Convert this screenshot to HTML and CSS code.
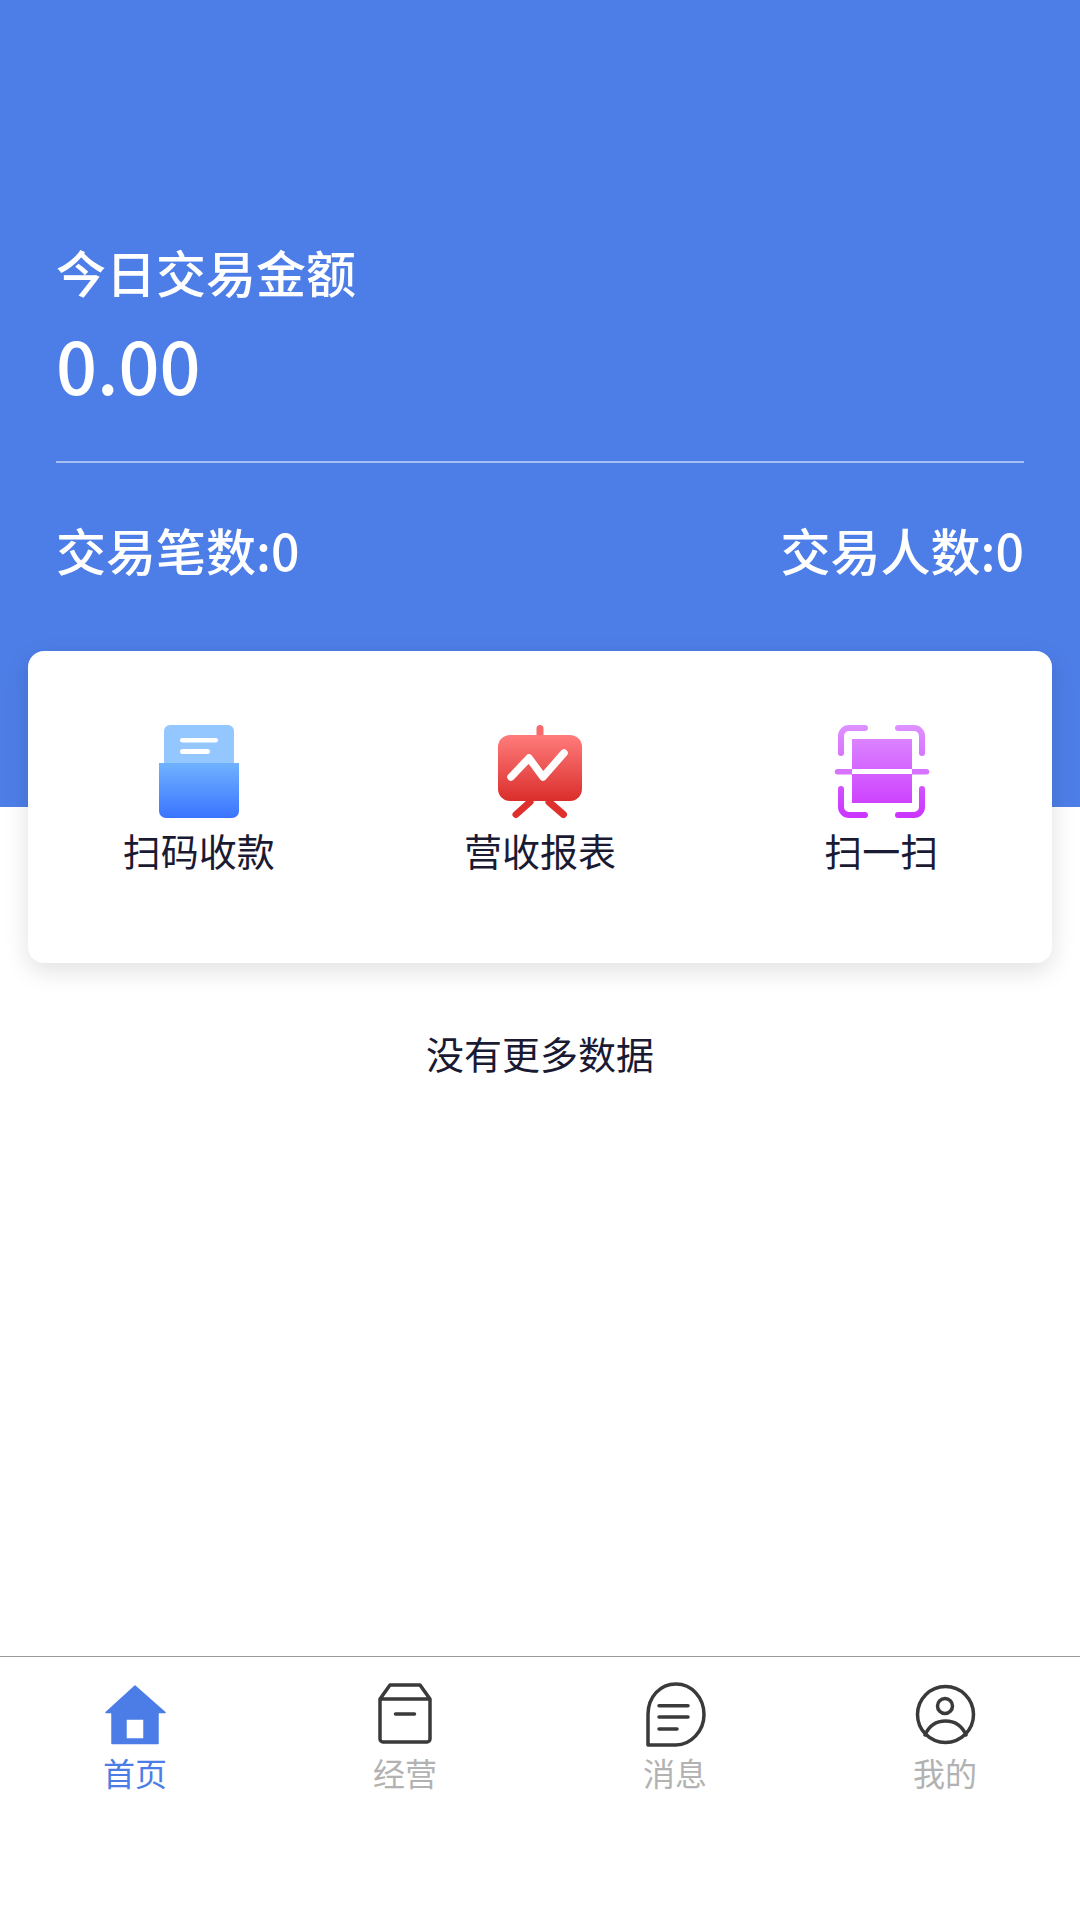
FILE: index.html
```html
<!DOCTYPE html>
<html lang="zh-CN">
<head>
    <meta charset="UTF-8">
    <meta name="viewport" content="width=device-width, initial-scale=1.0">
    <title>首页</title>
    <link rel="stylesheet" href="styles.css">
</head>
<body>
    <div class="page">
        <div class="header">
            <div class="today_label">今日交易金额</div>
            <div class="today_amount">0.00</div>
            <div class="stats">
                <span>交易笔数:0</span>
                <span>交易人数:0</span>
            </div>
        </div>

        <div class="main">
            <div class="card">
                <div class="card_item">
                    <svg class="card_icon" viewBox="0 0 100 100">
                        <defs>
                            <linearGradient id="boxFill" x1="0" y1="0" x2="0" y2="1">
                                <stop offset="0" stop-color="#70b2ff"/>
                                <stop offset="1" stop-color="#3a74ff"/>
                            </linearGradient>
                        </defs>
                        <path d="M15 41V9a6 6 0 0 1 6-6h58a6 6 0 0 1 6 6v32z" fill="#94c6ff"/>
                        <rect x="31" y="16" width="38" height="4.5" rx="2.25" fill="#fff"/>
                        <rect x="31" y="27" width="30" height="5" rx="2.5" fill="#fff"/>
                        <path d="M10 41h80v48a7 7 0 0 1-7 7H17a7 7 0 0 1-7-7z" fill="url(#boxFill)"/>
                    </svg>
                    <div class="card_label">扫码收款</div>
                </div>
                <div class="card_item">
                    <svg class="card_icon" viewBox="0 0 100 100">
                        <defs>
                            <linearGradient id="boardFill" x1="0" y1="0" x2="0" y2="1">
                                <stop offset="0" stop-color="#ff7c7c"/>
                                <stop offset="1" stop-color="#da2e2b"/>
                            </linearGradient>
                        </defs>
                        <path d="M50 6.500V14" stroke="#f56a6a" stroke-width="7" stroke-linecap="round"/>
                        <path d="M40 80L26 92.500M59 80L73.500 92.500" stroke="#df302d" stroke-width="7" stroke-linecap="round"/>
                        <rect x="8" y="13" width="84" height="66" rx="12" fill="url(#boardFill)"/>
                        <path d="M21 55L39 36L53 55L74 31" fill="none" stroke="#fff" stroke-width="7.500" stroke-linecap="round" stroke-linejoin="round"/>
                    </svg>
                    <div class="card_label">营收报表</div>
                </div>
                <div class="card_item">
                    <svg class="card_icon" viewBox="0 0 100 100">
                        <defs>
                            <linearGradient id="scanFill" gradientUnits="userSpaceOnUse" x1="0" y1="3" x2="0" y2="96">
                                <stop offset="0" stop-color="#de92ff"/>
                                <stop offset="1" stop-color="#cb33ff"/>
                            </linearGradient>
                        </defs>
                        <path d="M10 31V14a8 8 0 0 1 8-8H34M67 6H83a8 8 0 0 1 8 8V31M10 67V85a8 8 0 0 0 8 8H34M67 93H83a8 8 0 0 0 8-8V67" fill="none" stroke="url(#scanFill)" stroke-width="6" stroke-linecap="round"/>
                        <path d="M21 17H81V47H21zM21 52H81V81H21z" fill="url(#scanFill)"/>
                        <path d="M21 47H6.500a2.500 2.500 0 0 0 0 5.500H21zM81 47H95.500a2.500 2.500 0 0 1 0 5.500H81z" fill="#d873ff"/>
                    </svg>
                    <div class="card_label">扫一扫</div>
                </div>
            </div>
            <div class="no_more">没有更多数据</div>
        </div>

        <div class="tabbar">
            <div class="tab active">
                <svg class="tab_icon" viewBox="0 0 70 70">
                    <path fill-rule="evenodd" fill="#4c7de6" stroke="#4c7de6" stroke-width="1.500" stroke-linejoin="round" d="M35 6L65 32.500L58 32.500V63.500H12V32.500L6 32.500zM26 39V59H44V39z"/>
                </svg>
                <div class="tab_label">首页</div>
            </div>
            <div class="tab">
                <svg class="tab_icon" viewBox="0 0 70 70">
                    <path class="tab_line" d="M10 19L20 5H50L60 19V59a3 3 0 0 1-3 3H13a3 3 0 0 1-3-3zM10 19H60M25.500 34H44.500"/>
                </svg>
                <div class="tab_label">经营</div>
            </div>
            <div class="tab">
                <svg class="tab_icon" viewBox="0 0 70 70">
                    <path class="tab_line" d="M8 65V34.500C8 17 20 4 36 4S64 18 64 34.500C64 51 51 65 36 65zM19 25.700H48M19 37H48M19 49H37"/>
                </svg>
                <div class="tab_label">消息</div>
            </div>
            <div class="tab">
                <svg class="tab_icon" viewBox="0 0 70 70">
                    <circle class="tab_line" cx="35.500" cy="34.500" r="28"/>
                    <circle class="tab_line" cx="35" cy="26" r="7.500"/>
                    <path class="tab_line" d="M15 55C19 46 26 41 35.500 41S52 46 56 55"/>
                </svg>
                <div class="tab_label">我的</div>
            </div>
        </div>
    </div>
</body>
</html>
```

FILE: styles.css
```css
* {
    box-sizing: border-box;
}
body {
    margin: 0;
    font-family: "Noto Sans CJK SC", "Noto Sans", sans-serif;
    color: #1a1a33;
    background: #fff;
}
.page {
    display: flex;
    flex-direction: column;
    height: 1920px;
}
.header {
    height: 807px;
    padding: 241px 56px 0 56px;
    background: #4d7ee7;
    color: #fff;
}
.today_label {
    font-size: 50px;
    line-height: 60px;
    font-weight: 500;
}
.today_amount {
    margin-top: 23px;
    padding-bottom: 57px;
    font-size: 72px;
    line-height: 80px;
    font-weight: 500;
    border-bottom: 2px solid rgba(255,255,255,0.5);
}
.stats {
    display: flex;
    justify-content: space-between;
    margin-top: 56px;
    font-size: 50px;
    line-height: 60px;
    font-weight: 500;
}
.main {
    flex: 1;
}
.card {
    display: grid;
    grid-template-columns: repeat(3, 1fr);
    height: 312px;
    margin: -156px 28px 0 28px;
    position: relative;
    padding-top: 71px;
    background: #fff;
    border-radius: 16px;
    box-shadow: 0 8px 24px rgba(0,0,0,0.12);
}
.card_item {
    display: flex;
    flex-direction: column;
    align-items: center;
}
.card_icon {
    width: 100px;
    height: 100px;
}
.card_label {
    margin-top: 3px;
    font-size: 38px;
    line-height: 50px;
}
.no_more {
    margin-top: 65px;
    text-align: center;
    font-size: 38px;
    line-height: 50px;
}
.tabbar {
    display: grid;
    grid-template-columns: repeat(4, 1fr);
    height: 264px;
    padding-top: 23px;
    border-top: 1px solid #999;
}
.tab {
    display: flex;
    flex-direction: column;
    align-items: center;
    color: #b2b2b2;
}
.tab.active {
    color: #4c7de6;
}
.tab_icon {
    width: 70px;
    height: 70px;
}
.tab_line {
    fill: none;
    stroke: #3a3a3a;
    stroke-width: 3.5;
    stroke-linecap: round;
    stroke-linejoin: round;
}
.tab_label {
    margin-top: 0;
    font-size: 32px;
    line-height: 44px;
}
```
